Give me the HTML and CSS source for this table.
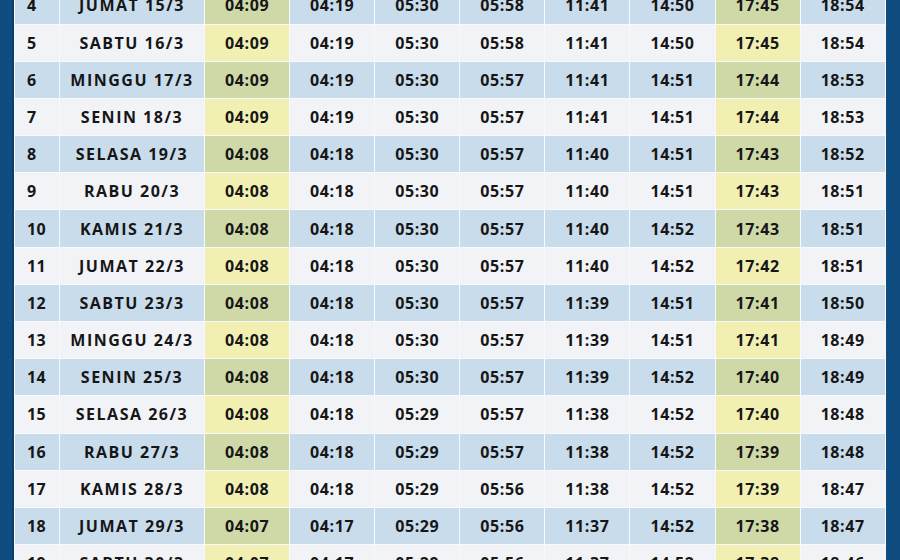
FILE: index.html
```html
<!DOCTYPE html>
<html lang="id">
<head>
<meta charset="utf-8">
<title>Jadwal Imsakiyah</title>
<link rel="stylesheet" href="styles.css">
</head>
<body>
<div class="frame">
<table class="sched">
<colgroup>
<col class="c-no"><col class="c-day">
<col class="c-t"><col class="c-t"><col class="c-t"><col class="c-t"><col class="c-t"><col class="c-t"><col class="c-t"><col class="c-t">
</colgroup>
<tbody>
<tr class="blue"><td class="no">4</td><td class="day">JUMAT 15/3</td><td class="hl">04:09</td><td>04:19</td><td>05:30</td><td>05:58</td><td>11:41</td><td>14:50</td><td class="hl">17:45</td><td>18:54</td></tr>
<tr class="light"><td class="no">5</td><td class="day">SABTU 16/3</td><td class="hl">04:09</td><td>04:19</td><td>05:30</td><td>05:58</td><td>11:41</td><td>14:50</td><td class="hl">17:45</td><td>18:54</td></tr>
<tr class="blue"><td class="no">6</td><td class="day">MINGGU 17/3</td><td class="hl">04:09</td><td>04:19</td><td>05:30</td><td>05:57</td><td>11:41</td><td>14:51</td><td class="hl">17:44</td><td>18:53</td></tr>
<tr class="light"><td class="no">7</td><td class="day">SENIN 18/3</td><td class="hl">04:09</td><td>04:19</td><td>05:30</td><td>05:57</td><td>11:41</td><td>14:51</td><td class="hl">17:44</td><td>18:53</td></tr>
<tr class="blue"><td class="no">8</td><td class="day">SELASA 19/3</td><td class="hl">04:08</td><td>04:18</td><td>05:30</td><td>05:57</td><td>11:40</td><td>14:51</td><td class="hl">17:43</td><td>18:52</td></tr>
<tr class="light"><td class="no">9</td><td class="day">RABU 20/3</td><td class="hl">04:08</td><td>04:18</td><td>05:30</td><td>05:57</td><td>11:40</td><td>14:51</td><td class="hl">17:43</td><td>18:51</td></tr>
<tr class="blue"><td class="no">10</td><td class="day">KAMIS 21/3</td><td class="hl">04:08</td><td>04:18</td><td>05:30</td><td>05:57</td><td>11:40</td><td>14:52</td><td class="hl">17:43</td><td>18:51</td></tr>
<tr class="light"><td class="no">11</td><td class="day">JUMAT 22/3</td><td class="hl">04:08</td><td>04:18</td><td>05:30</td><td>05:57</td><td>11:40</td><td>14:52</td><td class="hl">17:42</td><td>18:51</td></tr>
<tr class="blue"><td class="no">12</td><td class="day">SABTU 23/3</td><td class="hl">04:08</td><td>04:18</td><td>05:30</td><td>05:57</td><td>11:39</td><td>14:51</td><td class="hl">17:41</td><td>18:50</td></tr>
<tr class="light"><td class="no">13</td><td class="day">MINGGU 24/3</td><td class="hl">04:08</td><td>04:18</td><td>05:30</td><td>05:57</td><td>11:39</td><td>14:51</td><td class="hl">17:41</td><td>18:49</td></tr>
<tr class="blue"><td class="no">14</td><td class="day">SENIN 25/3</td><td class="hl">04:08</td><td>04:18</td><td>05:30</td><td>05:57</td><td>11:39</td><td>14:52</td><td class="hl">17:40</td><td>18:49</td></tr>
<tr class="light"><td class="no">15</td><td class="day">SELASA 26/3</td><td class="hl">04:08</td><td>04:18</td><td>05:29</td><td>05:57</td><td>11:38</td><td>14:52</td><td class="hl">17:40</td><td>18:48</td></tr>
<tr class="blue"><td class="no">16</td><td class="day">RABU 27/3</td><td class="hl">04:08</td><td>04:18</td><td>05:29</td><td>05:57</td><td>11:38</td><td>14:52</td><td class="hl">17:39</td><td>18:48</td></tr>
<tr class="light"><td class="no">17</td><td class="day">KAMIS 28/3</td><td class="hl">04:08</td><td>04:18</td><td>05:29</td><td>05:56</td><td>11:38</td><td>14:52</td><td class="hl">17:39</td><td>18:47</td></tr>
<tr class="blue"><td class="no">18</td><td class="day">JUMAT 29/3</td><td class="hl">04:07</td><td>04:17</td><td>05:29</td><td>05:56</td><td>11:37</td><td>14:52</td><td class="hl">17:38</td><td>18:47</td></tr>
<tr class="light"><td class="no">19</td><td class="day">SABTU 30/3</td><td class="hl">04:07</td><td>04:17</td><td>05:29</td><td>05:56</td><td>11:37</td><td>14:52</td><td class="hl">17:38</td><td>18:46</td></tr>
</tbody>
</table>
</div>
</body>
</html>
```
FILE: styles.css
```css
html, body {
  margin: 0;
  padding: 0;
  width: 900px;
  height: 560px;
  overflow: hidden;
  background: #0f4c80;
}

.frame {
  width: 900px;
  height: 560px;
  background: #0f4c80;
  padding-left: 12px;
  box-sizing: border-box;
  overflow: hidden;
}

.sched {
  border-left: 2px solid #0a3f6c;
  background: #f7f9fc;
  border-collapse: separate;
  border-spacing: 1px 1px;
  table-layout: fixed;
  width: 872px;
  margin-top: -13.7px;
  font-family: "Open Sans", "Liberation Sans", sans-serif;
  font-weight: 700;
  font-size: 16px;
  color: #161616;
}

.c-no { width: 44px; }
.c-day { width: 144px; }
.c-t { width: 84.1px; }

.sched td {
  height: 36.2px;
  padding: 0;
  text-align: center;
  vertical-align: middle;
  white-space: nowrap;
  letter-spacing: 0.6px;
}

.sched td.no {
  text-align: left;
  padding-left: 12px;
  letter-spacing: 0.3px;
}

.sched td.day {
  letter-spacing: 1.5px;
}

.blue td { background: #c9dcec; }
.light td { background: #f2f3f7; }
.blue td.hl { background: #cfd9a8; }
.light td.hl { background: #f1f0b2; }
```
